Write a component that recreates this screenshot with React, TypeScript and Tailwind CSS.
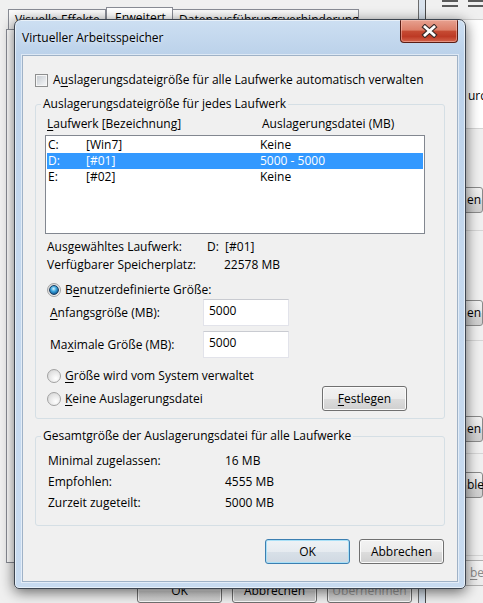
import React from "react";

const U = ({ children }: { children: React.ReactNode }) => (
  <span className="underline underline-offset-[2px] decoration-1">{children}</span>
);

function Checkbox() {
  return (
    <span className="inline-block shrink-0 w-[13px] h-[13px] border border-[#8e8f8f] bg-[linear-gradient(135deg,#c3c8ce,#eef0f2_80%)] shadow-[inset_0_0_0_1px_#f6f6f6]" />
  );
}

function Radio({ checked }: { checked?: boolean }) {
  return (
    <span className="flex shrink-0 items-center justify-center w-[14px] h-[14px] rounded-full border border-[#a2a2a2] bg-[radial-gradient(circle_at_65%_70%,#ffffff,#e6e6e6_55%,#cfcfcf)]">
      {checked && (
        <span className="w-[10px] h-[10px] rounded-full border border-[#1d3f61] bg-[radial-gradient(circle_at_45%_35%,#d4f4ff_0%,#3aa3dc_40%,#0f5690_80%)]" />
      )}
    </span>
  );
}

function Btn({
  children,
  def,
  className = "",
}: {
  children: React.ReactNode;
  def?: boolean;
  className?: string;
}) {
  return (
    <div
      className={`flex items-center justify-center w-[85px] h-[25px] rounded-[3px] border ${
        def
          ? "border-[#3c7fb1] bg-[linear-gradient(180deg,#eef2f6_0%,#e6ebf0_50%,#d8e0e8_51%,#d0d9e2_100%)] shadow-[inset_0_0_0_1px_#a9e0f7]"
          : "border-[#707070] bg-[linear-gradient(180deg,#f2f2f2_0%,#ebebeb_50%,#dddddd_51%,#cfcfcf_100%)] shadow-[inset_0_0_0_1px_#fbfbfb]"
      } ${className}`}
    >
      {children}
    </div>
  );
}

function TextBox({ value }: { value: string }) {
  return (
    <div className="w-[86px] h-[27px] bg-white border border-[#e2e3ea] border-t-[#c9cbd1] pl-[5px] pt-[3px] leading-[16px]">
      {value}
    </div>
  );
}

const drives = [
  { d: "C:", l: "[Win7]", s: "Keine", sel: false },
  { d: "D:", l: "[#01]", s: "5000 - 5000", sel: true },
  { d: "E:", l: "[#02]", s: "Keine", sel: false },
];

function BackgroundWindow() {
  return (
    <div className="absolute left-0 top-0 w-[418px] h-[603px] flex flex-col">
      <div className="flex items-end h-[29px] pl-[8px]">
        <div className="w-[98px] h-[20px] border border-b-0 border-[#898c95] bg-[linear-gradient(#fbfbfb,#ececec)] pl-[6px] leading-[20px] whitespace-nowrap overflow-hidden">
          Visuelle Effekte
        </div>
        <div className="w-[67px] h-[23px] border border-b-0 border-[#898c95] bg-white pl-[8px] leading-[20px] -mb-px relative">
          Erweitert
        </div>
        <div className="w-[186px] h-[20px] border border-b-0 border-l-0 border-[#898c95] bg-[linear-gradient(#fbfbfb,#ececec)] pl-[6px] leading-[20px] whitespace-nowrap overflow-hidden">
          Datenausführungsverhinderung
        </div>
      </div>
      <div className="ml-[6px] h-[539px] border border-r-0 border-[#898c95] bg-white" />
      <div className="flex gap-[10px] mt-[15px] ml-[137px]">
        <Btn className="w-[84px]">OK</Btn>
        <Btn className="w-[84px]">Abbrechen</Btn>
        <Btn className="w-[84px] text-[#9a9a9a]">Übernehmen</Btn>
      </div>
    </div>
  );
}

function RightWindow() {
  return (
    <>
      <div className="absolute left-[418px] top-0 w-[8px] h-[603px] border-x border-l-[#6d6d6d] border-r-[#4a4a4a] bg-[#d9e3ee]" />
      <div className="absolute left-[426px] top-0 w-[57px] h-[603px] bg-[#f0f0f0] flex flex-col overflow-hidden">
        <div className="h-[12px] flex gap-[10px] pl-[16px] pt-[0px]">
          <div className="w-[20px] flex flex-col gap-[3px]">
            <div className="h-[2px] bg-[#5a5a5a]" />
            <div className="h-[2px] bg-[#5a5a5a]" />
          </div>
          <div className="w-[20px] flex flex-col gap-[3px]">
            <div className="h-[2px] bg-[#5a5a5a]" />
            <div className="h-[2px] bg-[#5a5a5a]" />
          </div>
        </div>
        <div className="h-[7px]" />
        <div className="h-[109px] bg-white border-t border-[#cfcfcf] flex items-end pb-[23px] pl-[42px] whitespace-nowrap">
          urch
        </div>
        <div className="h-[102px] border-t border-[#d5d5d5] pt-[58px]">
          <div className="ml-[36px] h-[26px] border border-[#8a8a8a] rounded-[3px] bg-[linear-gradient(#f2f2f2,#e6e6e6_50%,#d6d6d6_51%,#cfcfcf)] pl-[4px] leading-[24px]">en</div>
        </div>
        <div className="h-[110px] border-t border-[#d5d5d5] pt-[69px]">
          <div className="ml-[36px] h-[26px] border border-[#8a8a8a] rounded-[3px] bg-[linear-gradient(#f2f2f2,#e6e6e6_50%,#d6d6d6_51%,#cfcfcf)] pl-[4px] leading-[24px]">en</div>
        </div>
        <div className="h-[113px] border-t border-[#d5d5d5] pt-[75px]">
          <div className="ml-[36px] h-[26px] border border-[#8a8a8a] rounded-[3px] bg-[linear-gradient(#f2f2f2,#e6e6e6_50%,#d6d6d6_51%,#cfcfcf)] pl-[4px] leading-[24px]">en</div>
        </div>
        <div className="h-[102px] border-t border-[#d5d5d5] pt-[18px]">
          <div className="ml-[36px] h-[26px] border border-[#8a8a8a] rounded-[3px] bg-[linear-gradient(#f2f2f2,#e6e6e6_50%,#d6d6d6_51%,#cfcfcf)] pl-[4px] leading-[24px]">ble</div>
        </div>
        <div className="border-t border-[#d5d5d5] pt-[4px]">
          <div className="ml-[30px] w-[80px] h-[26px] border border-[#b0b0b0] rounded-[3px] bg-[linear-gradient(#f4f4f4,#ececec)] pl-[13px] leading-[24px] text-[#8a8a8a] whitespace-nowrap">
            <U>b</U>e
          </div>
        </div>
      </div>
    </>
  );
}

function Dialog() {
  return (
    <div className="absolute left-[14px] top-[19px] w-[452px] h-[570px] flex flex-col rounded-t-[7px] rounded-b-[5px] border border-[#3d4550] bg-[linear-gradient(180deg,#cddff2_0%,#bcd2ea_6%,#c4d8ee_40%,#c8dbf0_100%)] shadow-[0_3px_14px_rgba(0,0,0,0.6),inset_0_0_0_1px_rgba(255,255,255,0.55)]">
      <div className="flex h-[35px] shrink-0">
        <div className="self-center pl-[7px] pt-[1px] text-[12px] text-black [text-shadow:0_0_6px_rgba(255,255,255,0.9)]">
          Virtueller Arbeitsspeicher
        </div>
        <div className="ml-auto mr-[7px] w-[58px] h-[23px] rounded-b-[4px] rounded-t-[1px] border border-[#5a1d14] border-t-0 bg-[linear-gradient(180deg,#e7a190_0%,#dc7f69_45%,#c54a32_52%,#bd3a25_75%,#d4644c_100%)] shadow-[inset_0_0_0_1px_rgba(255,210,200,0.45)] flex items-center justify-center">
          <svg width="17" height="14" viewBox="0 0 17 14">
            <path d="M4 3 L13 11 M13 3 L4 11" stroke="#3a2a28" strokeWidth="5" strokeLinecap="square" />
            <path d="M4 3 L13 11 M13 3 L4 11" stroke="#ffffff" strokeWidth="2.8" strokeLinecap="square" />
          </svg>
        </div>
      </div>
      <div className="mx-[7px] h-[527px] shrink-0 border border-[#9fb2c7] bg-[#f0f0f0] shadow-[0_0_0_1px_rgba(255,255,255,0.5)] flex flex-col">
        <div className="flex items-center h-[16px] mt-[16px] pl-[12px] gap-[5px]">
          <Checkbox />
          <span>
            A<U>u</U>slagerungsdateigröße für alle Laufwerke automatisch verwalten
          </span>
        </div>

        <fieldset className="mx-[12px] mt-[8px] border border-[#d5dfe5] rounded-[3px] pb-[7px] flex flex-col min-w-0">
          <legend className="ml-[5px] px-[2px] leading-[16px]">
            Auslagerungsdateigröße für jedes Laufwerk
          </legend>
          <div className="flex h-[16px] leading-[16px] mt-[4px] pl-[11px]">
            <span className="w-[215px]">
              <U>L</U>aufwerk [Bezeichnung]
            </span>
            <span>Auslagerungsdatei (MB)</span>
          </div>
          <div className="ml-[9px] mt-[3px] w-[380px] h-[99px] border border-[#828790] bg-white pt-[1px]">
            {drives.map((r) => (
              <div
                key={r.d}
                className={`mx-[1px] h-[16px] flex items-center ${
                  r.sel ? "bg-[#3399ff] text-white" : ""
                }`}
              >
                <span className="w-[39px] pl-[1px]">{r.d}</span>
                <span className="w-[174px]">{r.l}</span>
                <span>{r.s}</span>
              </div>
            ))}
          </div>
          <div className="mt-[4px] pl-[11px] flex flex-col leading-[18px]">
            <div className="flex">
              <span className="w-[160px]">Ausgewähltes Laufwerk:</span>
              <span>D:&nbsp;&nbsp;[#01]</span>
            </div>
            <div className="flex">
              <span className="w-[177px]">Verfügbarer Speicherplatz:</span>
              <span>22578 MB</span>
            </div>
          </div>
          <div className="mt-[7px] h-[18px] flex items-center gap-[4px] pl-[11px]">
            <Radio checked />
            <span>
              B<U>e</U>nutzerdefinierte Größe:
            </span>
          </div>
          <div className="flex items-center pl-[14px]">
            <span className="w-[153px]">
              <U>A</U>nfangsgröße (MB):
            </span>
            <TextBox value="5000" />
          </div>
          <div className="flex items-center pl-[14px] mt-[5px]">
            <span className="w-[153px]">
              Ma<U>x</U>imale Größe (MB):
            </span>
            <TextBox value="5000" />
          </div>
          <div className="mt-[9px] h-[18px] flex items-center gap-[4px] pl-[11px]">
            <Radio />
            <span>
              <U>G</U>röße wird vom System verwaltet
            </span>
          </div>
          <div className="mt-[1px] h-[25px] flex items-center gap-[4px] pl-[11px]">
            <Radio />
            <span>
              <U>K</U>eine Auslagerungsdatei
            </span>
            <Btn className="ml-auto mr-[37px]">
              <span>
                <U>F</U>estlegen
              </span>
            </Btn>
          </div>
        </fieldset>

        <fieldset className="mx-[12px] mt-[9px] border border-[#d5dfe5] rounded-[3px] pb-[12px] flex flex-col min-w-0">
          <legend className="ml-[5px] px-[2px] leading-[16px]">
            Gesamtgröße der Auslagerungsdatei für alle Laufwerke
          </legend>
          <div className="mt-[6px] pl-[12px] flex flex-col">
            {[
              ["Minimal zugelassen:", "16 MB"],
              ["Empfohlen:", "4555 MB"],
              ["Zurzeit zugeteilt:", "5000 MB"],
            ].map(([a, b]) => (
              <div key={a} className="flex h-[21px] items-center">
                <span className="w-[177px]">{a}</span>
                <span>{b}</span>
              </div>
            ))}
          </div>
        </fieldset>

        <div className="flex justify-end gap-[9px] mt-[13px] pr-[13px]">
          <Btn def>OK</Btn>
          <Btn>Abbrechen</Btn>
        </div>
      </div>
    </div>
  );
}

export default function App() {
  return (
    <div className="relative w-[483px] h-[603px] overflow-hidden bg-[#f0f0f0] font-['Open_Sans',sans-serif] text-[12px] text-black">
      <BackgroundWindow />
      <RightWindow />
      <Dialog />
    </div>
  );
}
